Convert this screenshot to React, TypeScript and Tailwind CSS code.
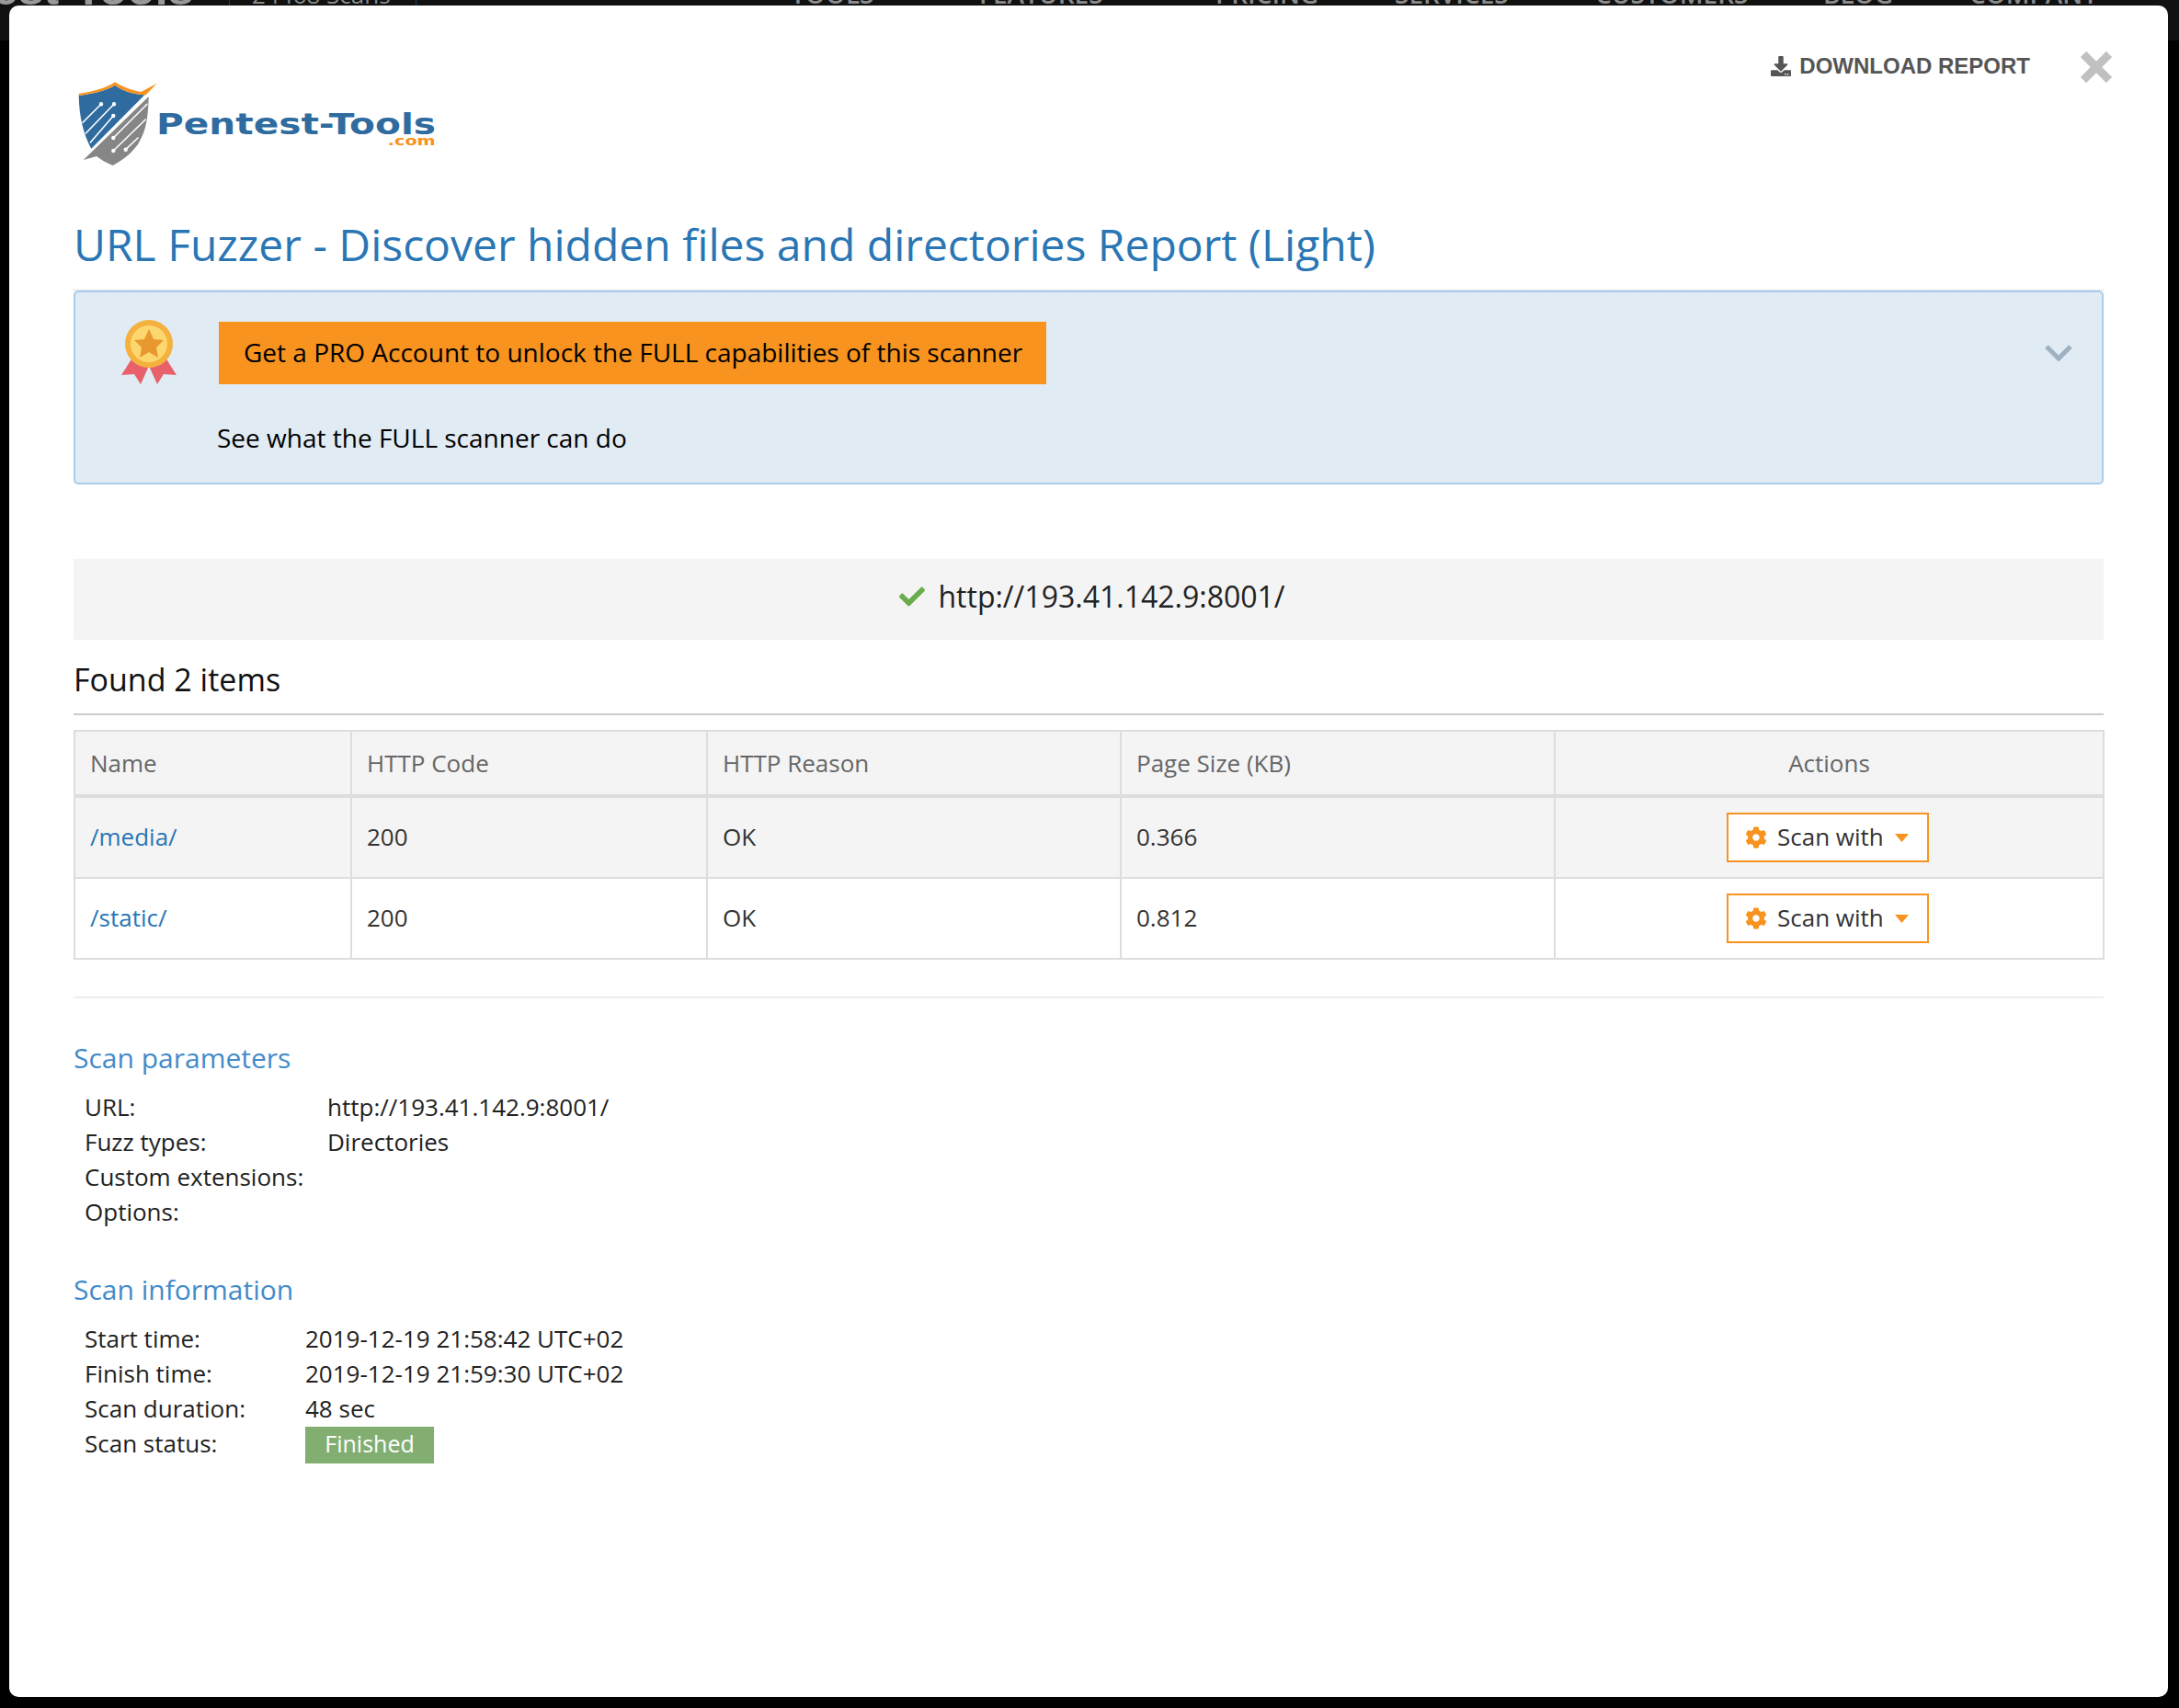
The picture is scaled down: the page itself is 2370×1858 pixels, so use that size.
import { FaCheck, FaCog, FaDownload } from "react-icons/fa"

const navItems = [
  { label: "TOOLS", box: "w-[205px]", caret: true },
  { label: "FEATURES", box: "w-[257px]", caret: true },
  { label: "PRICING", box: "w-[195px]", caret: false },
  { label: "SERVICES", box: "w-[218px]", caret: false },
  { label: "CUSTOMERS", box: "w-[248px]", caret: false },
  { label: "BLOG", box: "w-[159px]", caret: false },
  { label: "COMPANY", box: "w-[200px]", caret: true },
]

const results = [
  { name: "/media/", code: "200", reason: "OK", size: "0.366", rowClass: "h-[89px] border-b-2 border-[#ddd] bg-[#f4f4f4] text-[#333]" },
  { name: "/static/", code: "200", reason: "OK", size: "0.812", rowClass: "h-[88px] border-b-2 border-[#ddd] bg-white text-[#333]" },
]

const scanParams = [
  { label: "URL:", value: "http://193.41.142.9:8001/" },
  { label: "Fuzz types:", value: "Directories" },
  { label: "Custom extensions:", value: "" },
  { label: "Options:", value: "" },
]

const scanInfo = [
  { label: "Start time:", value: "2019-12-19 21:58:42 UTC+02" },
  { label: "Finish time:", value: "2019-12-19 21:59:30 UTC+02" },
  { label: "Scan duration:", value: "48 sec" },
]

function Logo() {
  return (
    <svg width="400" height="100" viewBox="0 0 400 100" className="block">
      <path d="M5.7 19 C20 17 35 14 45 7.7 C54 14 63 17 77.3 18.3 L19.3 76.7 C11 62 6 42 5.7 19 Z" fill="#2f6b9f" />
      <path d="M5.7 16.7 C20 15 35 11 45 4.3 C54 10 63 13 73.3 15 L90.7 5.7 L78.3 18.5 C63 17 54 14 45 7.7 C35 14 20 17 5.7 19 Z" fill="#f7931e" />
      <path d="M81.7 20 L10.7 89 L25 85 C30 89 36 92 42.7 95 C56 88 64 80 70 72 C77 60 81 50 81.7 20 Z" fill="#868686" />
      <g stroke="#fff" strokeWidth="1.6" strokeLinecap="round" fill="#fff">
        <line x1="10" y1="48.3" x2="30" y2="28.3" />
        <line x1="13.3" y1="60" x2="44" y2="28.3" />
        <line x1="18.3" y1="70" x2="43.3" y2="41" />
        <line x1="43.3" y1="65" x2="80" y2="28.3" />
        <line x1="43.3" y1="79" x2="78.3" y2="45" />
        <line x1="56.7" y1="77.7" x2="70" y2="65" />
        <circle cx="30" cy="28.3" r="1.4" />
        <circle cx="44" cy="28.3" r="1.4" />
        <circle cx="43.3" cy="41" r="1.4" />
        <circle cx="43.3" cy="65" r="1.4" />
        <circle cx="43.3" cy="79" r="1.4" />
        <circle cx="56.7" cy="77.7" r="1.4" />
      </g>
      <text
        x="90"
        y="61"
        fill="#2f6b9f"
        fontFamily="'DejaVu Sans', sans-serif"
        fontWeight="700"
        fontSize="32"
        textLength="304"
        lengthAdjust="spacingAndGlyphs"
      >
        Pentest-Tools
      </text>
      <text
        x="341.7"
        y="73"
        fill="#f7931e"
        fontFamily="'DejaVu Sans', sans-serif"
        fontWeight="700"
        fontSize="14"
        textLength="52"
        lengthAdjust="spacingAndGlyphs"
      >
        .com
      </text>
    </svg>
  )
}

function Medal() {
  return (
    <svg width="60" height="70" viewBox="0 0 60 70" className="-mt-[2px] block shrink-0">
      <path d="M14 38 L0 60 L14 59 L21 70 L30 50 L39 70 L46 59 L60 60 L46 38 Z" fill="#e8606a" />
      <ellipse cx="30" cy="26" rx="26" ry="26" fill="#f5b13d" />
      <ellipse cx="30" cy="26" rx="20" ry="20" fill="#fcd66f" />
      <path d="M30 10 L35 21 L46 22 L38 30 L40 41 L30 35 L20 41 L22 30 L14 22 L25 21 Z" fill="#e8982e" />
    </svg>
  )
}

function ScanButton() {
  return (
    <button className="mr-[3px] inline-flex h-[54px] w-[220px] items-center border-2 border-[#f7931e] bg-white pl-[18px] text-[26px] text-[#333]">
      <FaCog className="mr-[11px] text-[24px] text-[#f7931e]" />
      <span className="pb-[2px]">Scan with</span>
      <svg width="15" height="9" viewBox="0 0 15 9" className="ml-[12px]">
        <path d="M0 0 H15 L7.5 9 Z" fill="#f7931e" />
      </svg>
    </button>
  )
}

function InfoRow({ label, value, labelWidth }: { label: string; value: string; labelWidth: string }) {
  return (
    <div className="flex h-[38px] items-center pl-[12px] text-[26px] text-[#222]">
      <span className={labelWidth}>{label}</span>
      <span>{value}</span>
    </div>
  )
}

export default function App() {
  return (
    <div className="relative h-[1858px] w-[2370px] overflow-hidden bg-black font-['Open_Sans',sans-serif]">
      <div className="absolute inset-x-0 top-0 h-[44px] bg-[#111]">
        <div className="flex h-[6px] items-end overflow-hidden text-[#8a8a8a]">
          <span className="ml-[-8px] mb-[-2px] w-[216px] shrink-0 whitespace-nowrap font-['Liberation_Sans',sans-serif] text-[50px] leading-[40px] font-bold text-[#999]">est-Tools</span>
          <span className="ml-[41px] h-[6px] w-[1px] shrink-0 bg-[#1d3f5c]" />
          <span className="mb-[2px] ml-[24px] w-[178px] shrink-0 whitespace-nowrap text-[26px] leading-[20px]">24468 Scans</span>
          <span className="h-[6px] w-[1px] shrink-0 bg-[#1d3f5c]" />
          <div className="ml-[407px] flex items-end">
            {navItems.map((item) => (
              <span key={item.label} className={`${item.box} mb-[3px] flex shrink-0 items-end whitespace-nowrap text-[28px] leading-[20px] font-semibold`}>
                {item.label}
                {item.caret ? <span className="mb-[3px] ml-[20px] h-[6px] w-[2px] bg-[#8a8a8a]" /> : null}
              </span>
            ))}
          </div>
        </div>
      </div>

      <div className="relative ml-[10px] mt-[6px] h-[1840px] w-[2348px] rounded-[10px] bg-white px-[70px]">
        <div className="mr-[-9px] flex h-[230px] items-start justify-between">
          <div className="mt-[79px]">
            <Logo />
          </div>
          <div className="mt-[47px] flex items-center">
            <a className="flex items-center font-['Liberation_Sans',sans-serif] text-[24px] font-bold text-[#555]">
              <FaDownload className="mr-[9px] text-[22px]" />
              DOWNLOAD REPORT
            </a>
            <svg width="34" height="34" viewBox="0 0 34 34" className="ml-[55px] mt-[3px]">
              <path d="M3 3 L31 31 M31 3 L3 31" stroke="#c0c0c0" strokeWidth="9" />
            </svg>
          </div>
        </div>

        <h1 className="mb-[19px] h-[60px] text-[48px] leading-[60px] text-[#2a76b4]">
          URL Fuzzer - Discover hidden files and directories Report (Light)
        </h1>
        <div className="h-[1px] border-t border-dotted border-[#ccc]" />

        <div className="flex h-[211px] rounded-[5px] border-2 border-[#a9cdec] bg-[#e1ebf4] pl-[50px] pr-[32px] pt-[32px]">
          <Medal />
          <div className="ml-[44px]">
            <div className="ml-[2px] flex h-[68px] w-[900px] items-center bg-[#f7931e] pb-[2px] pl-[27px] text-[28px] text-black">
              Get a PRO Account to unlock the FULL capabilities of this scanner
            </div>
            <p className="mt-[38px] text-[28px] leading-[40px] text-black">See what the FULL scanner can do</p>
          </div>
          <svg width="30" height="18" viewBox="0 0 30 18" className="ml-auto mt-[25px]">
            <path d="M2 2 L15 15 L28 2" fill="none" stroke="#9db1c2" strokeWidth="5" />
          </svg>
        </div>

        <div className="mt-[81px] flex h-[88px] items-center justify-center bg-[#f4f4f4] pb-[6px] pl-[8px] text-[32px] text-[#222]">
          <FaCheck className="mr-[14px] text-[28px] text-[#68ac4c]" />
          http://193.41.142.9:8001/
        </div>

        <div className="mt-[23px] h-[59px] border-b-2 border-[#ccc] text-[34px] leading-[40px] text-[#111]">Found 2 items</div>

        <table className="mt-[16px] w-[2207px] table-fixed border-collapse border-2 border-[#ddd] text-[26px]">
          <colgroup>
            <col className="w-[301px]" />
            <col className="w-[387px]" />
            <col className="w-[450px]" />
            <col className="w-[472px]" />
            <col className="w-[597px]" />
          </colgroup>
          <thead>
            <tr className="h-[71px] border-b-4 border-[#ddd] bg-[#f4f4f4] text-[#666]">
              <th className="border-x-2 border-[#ddd] pl-[16px] text-left font-normal">Name</th>
              <th className="border-x-2 border-[#ddd] pl-[16px] text-left font-normal">HTTP Code</th>
              <th className="border-x-2 border-[#ddd] pl-[16px] text-left font-normal">HTTP Reason</th>
              <th className="border-x-2 border-[#ddd] pl-[16px] text-left font-normal">Page Size (KB)</th>
              <th className="border-x-2 border-[#ddd] text-center font-normal">Actions</th>
            </tr>
          </thead>
          <tbody>
            {results.map((row) => (
              <tr key={row.name} className={row.rowClass}>
                <td className="border-x-2 border-[#ddd] pb-[2px] pl-[16px] text-[#2a76b4]">{row.name}</td>
                <td className="border-x-2 border-[#ddd] pb-[2px] pl-[16px]">{row.code}</td>
                <td className="border-x-2 border-[#ddd] pb-[2px] pl-[16px]">{row.reason}</td>
                <td className="border-x-2 border-[#ddd] pb-[2px] pl-[16px]">{row.size}</td>
                <td className="border-x-2 border-[#ddd] text-center">
                  <ScanButton />
                </td>
              </tr>
            ))}
          </tbody>
        </table>

        <div className="mt-[40px] h-[2px] bg-[#eee]" />

        <h3 className="mt-[45px] h-[40px] text-[30px] leading-[40px] text-[#428bca]">Scan parameters</h3>
        <div className="mt-[14px]">
          {scanParams.map((item) => (
            <InfoRow key={item.label} label={item.label} value={item.value} labelWidth="w-[264px]" />
          ))}
        </div>

        <h3 className="mt-[46px] h-[40px] text-[30px] leading-[40px] text-[#428bca]">Scan information</h3>
        <div className="mt-[14px]">
          {scanInfo.map((item) => (
            <InfoRow key={item.label} label={item.label} value={item.value} labelWidth="w-[240px]" />
          ))}
          <div className="flex h-[38px] items-center pl-[12px] text-[26px] text-[#222]">
            <span className="w-[240px]">Scan status:</span>
            <span className="mt-[4px] flex h-[40px] w-[140px] shrink-0 items-center justify-center bg-[#82ae72] pb-[2px] text-[25px] text-white">Finished</span>
          </div>
        </div>
      </div>
    </div>
  )
}
